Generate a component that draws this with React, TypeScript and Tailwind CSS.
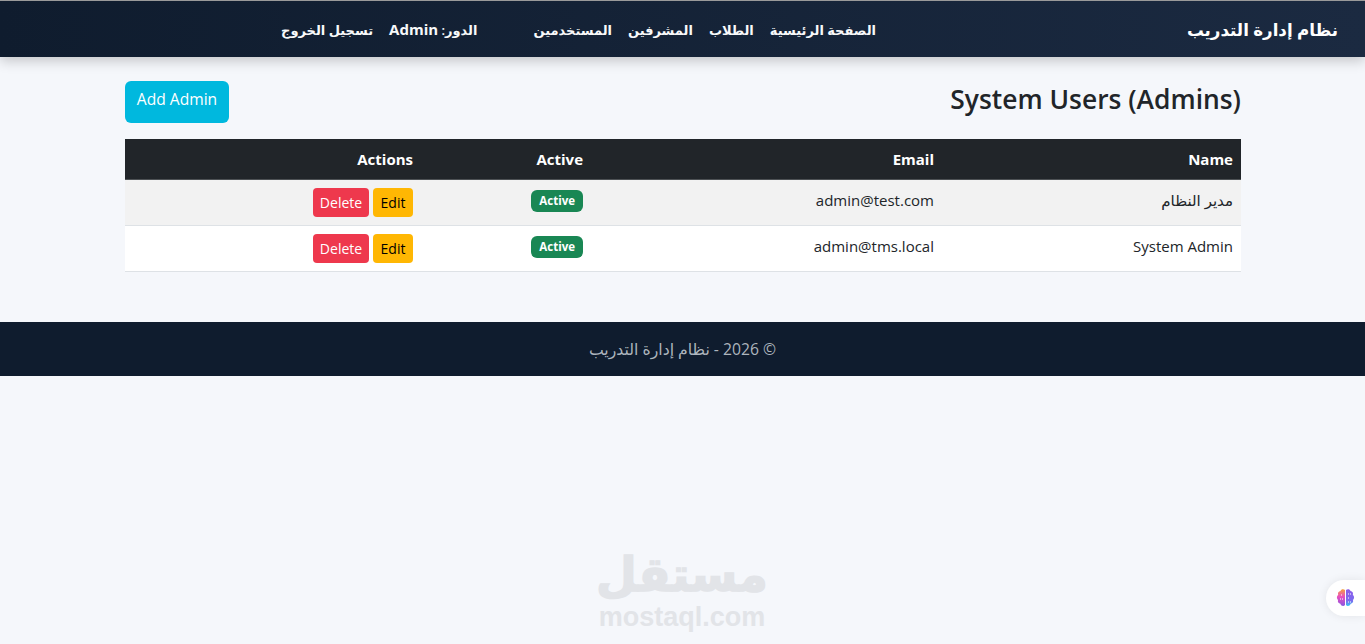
const uiFont = { fontFamily: '"Open Sans", "Noto Sans", "DejaVu Sans", sans-serif' };

const users = [
  { name: 'مدير النظام', email: 'admin@test.com', striped: true },
  { name: 'System Admin', email: 'admin@tms.local', striped: false },
];

function NavLink({ children }: { children: React.ReactNode }) {
  return <a className="pt-[3px] text-[13px] font-semibold text-[#f8f9fa] whitespace-nowrap">{children}</a>;
}

export default function App() {
  return (
    <div dir="rtl" style={uiFont} className="relative h-[644px] overflow-hidden bg-[#f5f7fb] text-[#212529]">
      {/* Navbar */}
      <nav className="relative flex h-[57px] items-center border-t border-[#9a9a9a] bg-gradient-to-l from-[#1b2a41] to-[#0f1c2e] pr-[27px] shadow-[0_4px_12px_rgba(0,0,0,0.2)]">
        <span className="w-[462px] shrink-0 pt-[2px] text-[16.7px] font-semibold text-white">نظام إدارة التدريب</span>
        <div className="flex items-center gap-4">
          <NavLink>الصفحة الرئيسية</NavLink>
          <NavLink>الطلاب</NavLink>
          <NavLink>المشرفين</NavLink>
          <NavLink>المستخدمين</NavLink>
        </div>
        <div className="mr-14 flex items-center gap-4">
          <a className="text-[13px] font-semibold text-[#f8f9fa] whitespace-nowrap">الدور: <span className="text-[15px] font-bold">Admin</span></a>
          <NavLink>تسجيل الخروج</NavLink>
        </div>
      </nav>

      {/* Main */}
      <main className="ml-[125px] mr-[124px] pt-6">
        <div className="flex items-center justify-between">
          <h1 className="pb-[6px] text-[26.4px] leading-[34px] font-semibold text-[#212529]">System Users (Admins)</h1>
          <button className="flex h-[42px] w-[104px] items-center justify-center rounded-md bg-[#00b8de] pb-[4px] text-[15.6px] text-white">
            Add Admin
          </button>
        </div>

        <table className="mt-4 w-full border-collapse text-[15px]">
          <thead>
            <tr className="h-[40px] border-b border-[#4d5154] bg-[#212529] text-white">
              <th className="w-[299px] px-2 text-right font-bold">Name</th>
              <th className="w-[351px] px-2 text-right font-bold">Email</th>
              <th className="w-[170px] px-2 text-right font-bold">Active</th>
              <th className="px-2 text-right font-bold">Actions</th>
            </tr>
          </thead>
          <tbody>
            {users.map(u => (
              <tr key={u.email} className={`h-[46px] border-b border-[#dee2e6] ${u.striped ? 'bg-[#f2f2f2]' : 'bg-white'}`}>
                <td className="px-2 pb-[4px] text-right">{u.name}</td>
                <td className="px-2 pb-[4px] text-right">{u.email}</td>
                <td className="px-2 pb-[4px] text-right">
                  <span className="inline-block rounded-[6px] bg-[#198754] px-2 py-[5px] text-[11.5px] leading-none font-bold text-white">Active</span>
                </td>
                <td className="px-2 text-right">
                  <div className="flex gap-1">
                    <button className="flex h-[29px] w-10 items-center justify-center rounded bg-[#ffb703] pt-[1px] text-sm text-black">Edit</button>
                    <button className="flex h-[29px] w-14 items-center justify-center rounded bg-[#ee384d] pt-[1px] text-sm text-white">Delete</button>
                  </div>
                </td>
              </tr>
            ))}
          </tbody>
        </table>
      </main>

      {/* Footer */}
      <footer className="mt-[50px] flex h-[54px] items-center justify-center bg-[#0f1c2e] pt-[2px] text-[15.7px] text-[#adb5bd]">
        © 2026 - نظام إدارة التدريب
      </footer>

      {/* Watermark */}
      <div className="absolute bottom-[14px] left-[599px] flex w-[166px] flex-col items-center text-[#e2e4e8]">
        <span className="mb-[4px] text-[47px] leading-[50px] font-bold [-webkit-text-stroke:1.5px_#e2e4e8]" style={{ fontFamily: '"DejaVu Sans", sans-serif' }}>مستقل</span>
        <span className="text-[27px] leading-[26px] font-bold" style={{ fontFamily: '"Liberation Sans", sans-serif' }}>mostaql.com</span>
      </div>

      {/* Floating brain widget */}
      <div className="absolute right-0 top-[580px] flex h-9 w-[39px] items-center justify-center rounded-l-[18px] bg-white shadow-[0_0_10px_rgba(0,0,0,0.08)]">
        <svg width="19" height="20" viewBox="0 0 19 20">
          <defs>
            <linearGradient id="brainL" x1="0" y1="0" x2="0" y2="1">
              <stop offset="0" stopColor="#f7a13c" />
              <stop offset="0.45" stopColor="#e84fc0" />
              <stop offset="1" stopColor="#8a55e0" />
            </linearGradient>
            <linearGradient id="brainR" x1="0" y1="0" x2="0" y2="1">
              <stop offset="0" stopColor="#8f5be8" />
              <stop offset="0.7" stopColor="#7a6cf0" />
              <stop offset="1" stopColor="#35c4ee" />
            </linearGradient>
          </defs>
          <path d="M9 2C7.5.5 5 1 4.5 3 2.5 3.2 1.5 5 2.2 6.8.5 8 .5 10.8 2 12c-.6 2 .6 3.6 2.4 3.7C5 18 7.6 18.7 9 17Z" fill="url(#brainL)" />
          <path d="M10 2c1.5-1.5 4-1 4.5 1 2 .2 3 2 2.3 3.8 1.7 1.2 1.7 4 .2 5.2.6 2-.6 3.6-2.4 3.7-.6 2.3-3.2 3-4.6 1.3Z" fill="url(#brainR)" />
          <path d="M5 7h2M4 11h3M12 6h3M12 10h2M12 14h3" stroke="#fff" strokeWidth="1" strokeDasharray="1 1" />
        </svg>
      </div>
    </div>
  );
}
